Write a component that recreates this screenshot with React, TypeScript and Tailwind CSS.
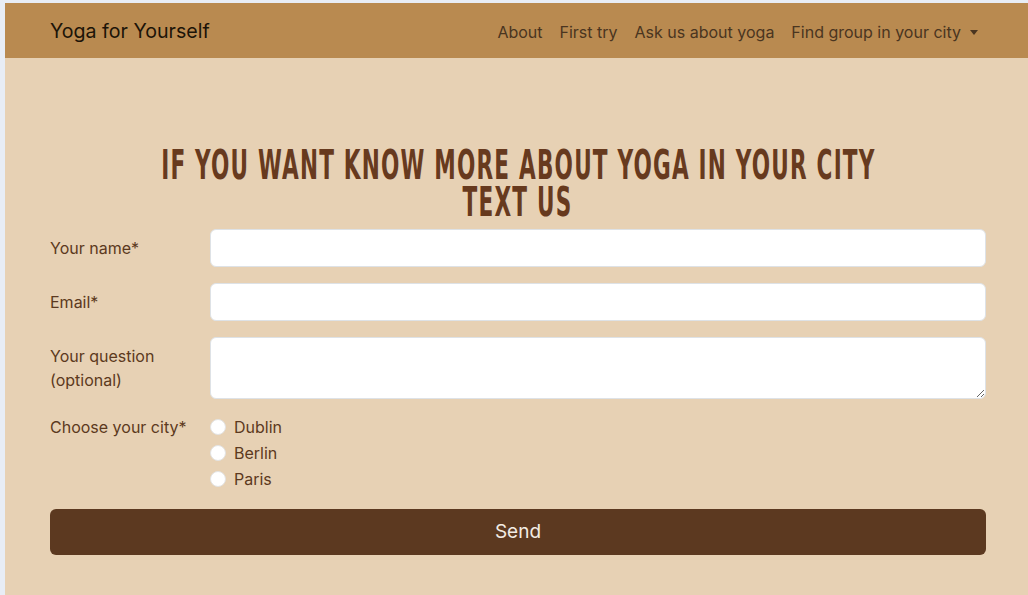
import { useState } from 'react';

const cities = ['Dublin', 'Berlin', 'Paris'];

export default function App() {
  const [city, setCity] = useState('');

  return (
    <div className="min-h-screen bg-[#e8edf5] pt-[3px] pl-[5px] font-['Inter','Liberation_Sans',sans-serif]">
      <nav className="h-[55px] bg-[#b98a50]">
        <div className="ml-[33px] flex h-full w-[960px] items-center justify-between px-3 pt-[3px]">
          <a className="text-[19.6px] text-[#1c1408]">Yoga for Yourself</a>
          <ul className="mr-2 flex items-center gap-[17px] text-[16px] text-[#4a3520]">
            <li>About</li>
            <li>First try</li>
            <li>Ask us about yoga</li>
            <li className="flex items-center gap-[9px]">
              Find group in your city
              <span className="mt-[1px] h-0 w-0 border-x-[4px] border-t-[5px] border-x-transparent border-t-[#4a3520]" />
            </li>
          </ul>
        </div>
      </nav>

      <main className="min-h-[537px] bg-[#e7d1b4]">
        <div className="ml-[33px] w-[960px] px-3 pt-[89px]">
          {/* condensed headline, squeezed to the width of the original display face */}
          <h1 className="flex flex-col items-center font-['DejaVu_Sans_Condensed','DejaVu_Sans',sans-serif] text-[40px] leading-[37px] font-bold tracking-[2px] text-[#673a1e] uppercase">
            <span className="inline-block scale-x-[0.6] whitespace-nowrap">If you want know more about yoga in your city</span>
            <span className="inline-block scale-x-[0.6] whitespace-nowrap">Text us</span>
          </h1>

          <form className="mt-[8px] flex flex-col gap-4 text-[16px] text-[#5c3920]">
            <div className="flex items-center">
              <label className="w-[160px]">Your name*</label>
              <input className="h-[38px] flex-1 rounded-md border border-[#dee2e6] bg-white px-3" />
            </div>
            <div className="flex items-center">
              <label className="w-[160px]">Email*</label>
              <input className="h-[38px] flex-1 rounded-md border border-[#dee2e6] bg-white px-3" />
            </div>
            <div className="flex">
              <label className="w-[160px] pt-[7px] leading-6">
                Your question
                <br />
                (optional)
              </label>
              <textarea className="h-[62px] flex-1 rounded-md border border-[#dee2e6] bg-white px-3" />
            </div>
            <div className="mt-[1px] flex">
              <label className="w-[160px] leading-[22px]">Choose your city*</label>
              <div className="flex flex-col gap-1">
                {cities.map((c) => (
                  <label key={c} className="flex items-center gap-2 leading-[22px]" onClick={() => setCity(c)}>
                    <span
                      className={
                        city === c
                          ? 'h-4 w-4 rounded-full border-[5px] border-[#5c3920] bg-white'
                          : 'h-4 w-4 rounded-full border border-[#e3e3e3] bg-white'
                      }
                    />
                    {c}
                  </label>
                ))}
              </div>
            </div>
            <button
              type="button"
              className="mt-[3px] h-[46px] w-full rounded-md bg-[#5c3920] text-[19px] text-[#f3ece4]"
            >
              Send
            </button>
          </form>
        </div>
      </main>
    </div>
  );
}
